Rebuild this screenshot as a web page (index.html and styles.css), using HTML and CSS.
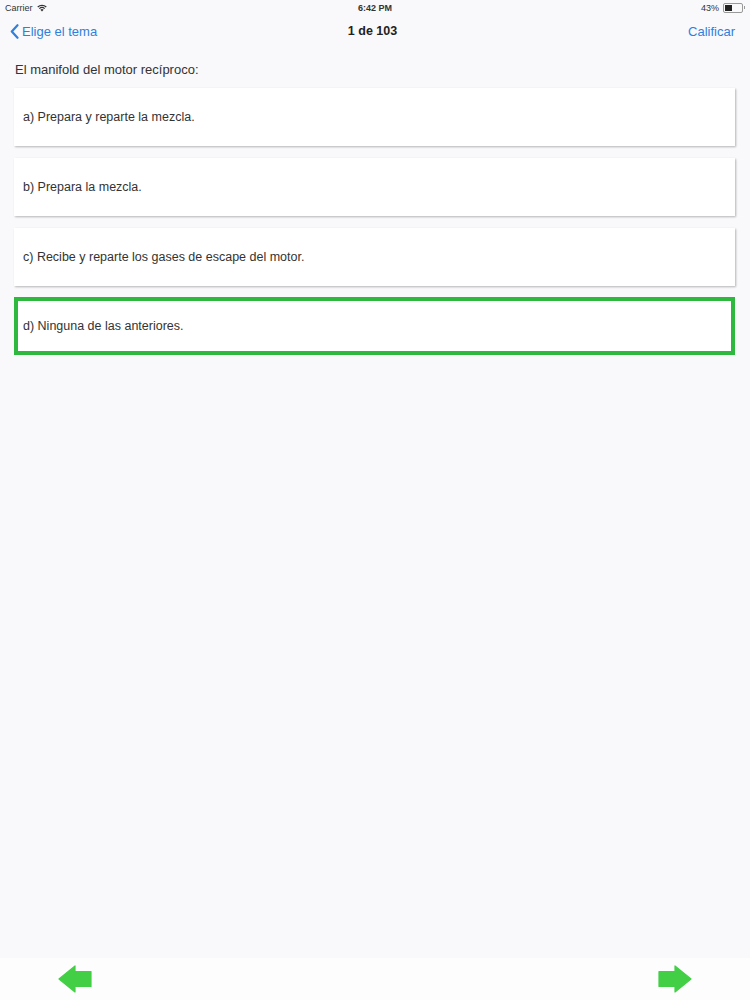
FILE: index.html
```html
<!DOCTYPE html>
<html lang="es">
<head>
    <meta charset="UTF-8">
    <meta name="viewport" content="width=device-width, initial-scale=1.0">
    <title>Cuestionario</title>
    <link rel="stylesheet" href="styles.css">
</head>
<body>

    <!-- Barra de estado -->
    <div class="status-bar">
        <div class="status-left">
            Carrier
            <svg class="wifi" width="10" height="8" viewBox="0 0 10 8">
                <path d="M5 7.6 L3.4 5.8 A2.4 2.4 0 0 1 6.6 5.8 Z" fill="#333"/>
                <path d="M1.9 4.2 A4.6 4.6 0 0 1 8.1 4.2 L7.2 5.1 A3.3 3.3 0 0 0 2.8 5.1 Z" fill="#333"/>
                <path d="M0.3 2.6 A6.9 6.9 0 0 1 9.7 2.6 L8.8 3.5 A5.6 5.6 0 0 0 1.2 3.5 Z" fill="#333"/>
            </svg>
        </div>
        <div class="status-time">6:42 PM</div>
        <div class="status-right">
            43%
            <span class="battery"><span class="battery-level"></span></span>
        </div>
    </div>

    <!-- Barra de navegación -->
    <nav class="navbar">
        <a class="nav-back">
            <svg width="9" height="15" viewBox="0 0 9 15">
                <path d="M7.5 1.2 L1.8 7.5 L7.5 13.8" fill="none" stroke="#2f80dc" stroke-width="2.2" stroke-linecap="round" stroke-linejoin="round"/>
            </svg>
            Elige el tema
        </a>
        <div class="nav-title">1 de 103</div>
        <a class="nav-action">Calificar</a>
    </nav>

    <main class="content">
        <p class="question">El manifold del motor recíproco:</p>

        <div class="option">a) Prepara y reparte la mezcla.</div>
        <div class="option">b) Prepara la mezcla.</div>
        <div class="option">c) Recibe y reparte los gases de escape del motor.</div>
        <div class="option correct">d) Ninguna de las anteriores.</div>
    </main>

    <!-- Botones de navegación inferiores -->
    <footer class="toolbar">
        <svg class="arrow" width="34" height="28" viewBox="0 0 34 28">
            <path d="M1 14 L17 1 L17 6.5 L33 6.5 L33 21.5 L17 21.5 L17 27 Z" fill="#43cf45" stroke="#43cf45" stroke-width="1.2" stroke-linejoin="round"/>
        </svg>
        <svg class="arrow" width="34" height="28" viewBox="0 0 34 28">
            <path d="M33 14 L17 1 L17 6.5 L1 6.5 L1 21.5 L17 21.5 L17 27 Z" fill="#43cf45" stroke="#43cf45" stroke-width="1.2" stroke-linejoin="round"/>
        </svg>
    </footer>

</body>
</html>
```

FILE: styles.css
```css
/* Estilos generales */
html, body {
    height: 100%;
}

body {
    font-family: 'Liberation Sans', Arial, sans-serif;
    background-color: #f9f8fb;
    margin: 0;
    color: #333;
    display: flex;
    flex-direction: column;
}

/* Barra de estado */
.status-bar {
    height: 15px;
    display: flex;
    align-items: center;
    justify-content: space-between;
    padding: 0 5px;
    font-size: 9px;
    color: #333;
}

.status-left, .status-right {
    flex: 1;
    display: flex;
    align-items: center;
    gap: 4px;
}

.status-right {
    justify-content: flex-end;
}

.status-time {
    font-weight: 600;
}

.battery {
    width: 16px;
    height: 6px;
    border: 1px solid #999;
    border-radius: 2px;
    padding: 1px;
    position: relative;
    margin-right: 2px;
}

.battery::after {
    content: '';
    position: absolute;
    right: -3px;
    top: 2px;
    width: 1px;
    height: 3px;
    background-color: #999;
}

.battery-level {
    display: block;
    width: 43%;
    height: 100%;
    background-color: #222;
}

/* Barra de navegación */
.navbar {
    height: 32px;
    display: flex;
    align-items: center;
    padding: 0 15px 0 10px;
    font-size: 13px;
}

.nav-back, .nav-action {
    flex: 1;
    color: #2f80dc;
    display: flex;
    align-items: center;
    gap: 3px;
}

.nav-action {
    justify-content: flex-end;
}

.nav-title {
    font-weight: 700;
    font-size: 12.5px;
    color: #222;
}

/* Contenido */
.content {
    flex: 1;
    padding: 0 15px 0 14px;
}

.question {
    margin: 14px 0 10px 1px;
    font-size: 13px;
    line-height: 17px;
}

.option {
    height: 58px;
    box-sizing: border-box;
    background-color: #fff;
    display: flex;
    align-items: center;
    padding-left: 9px;
    font-size: 12.5px;
    margin-bottom: 12px;
    box-shadow: 1px 1px 2px rgba(0, 0, 0, 0.28);
}

.option.correct {
    border: 4px solid #2eb83e;
    padding-left: 5px;
    box-shadow: none;
    margin-top: -1px;
}

/* Barra inferior */
.toolbar {
    height: 42px;
    background-color: #fdfdfe;
    display: flex;
    align-items: center;
    justify-content: space-between;
    padding: 0 58px 0 58px;
}
```
